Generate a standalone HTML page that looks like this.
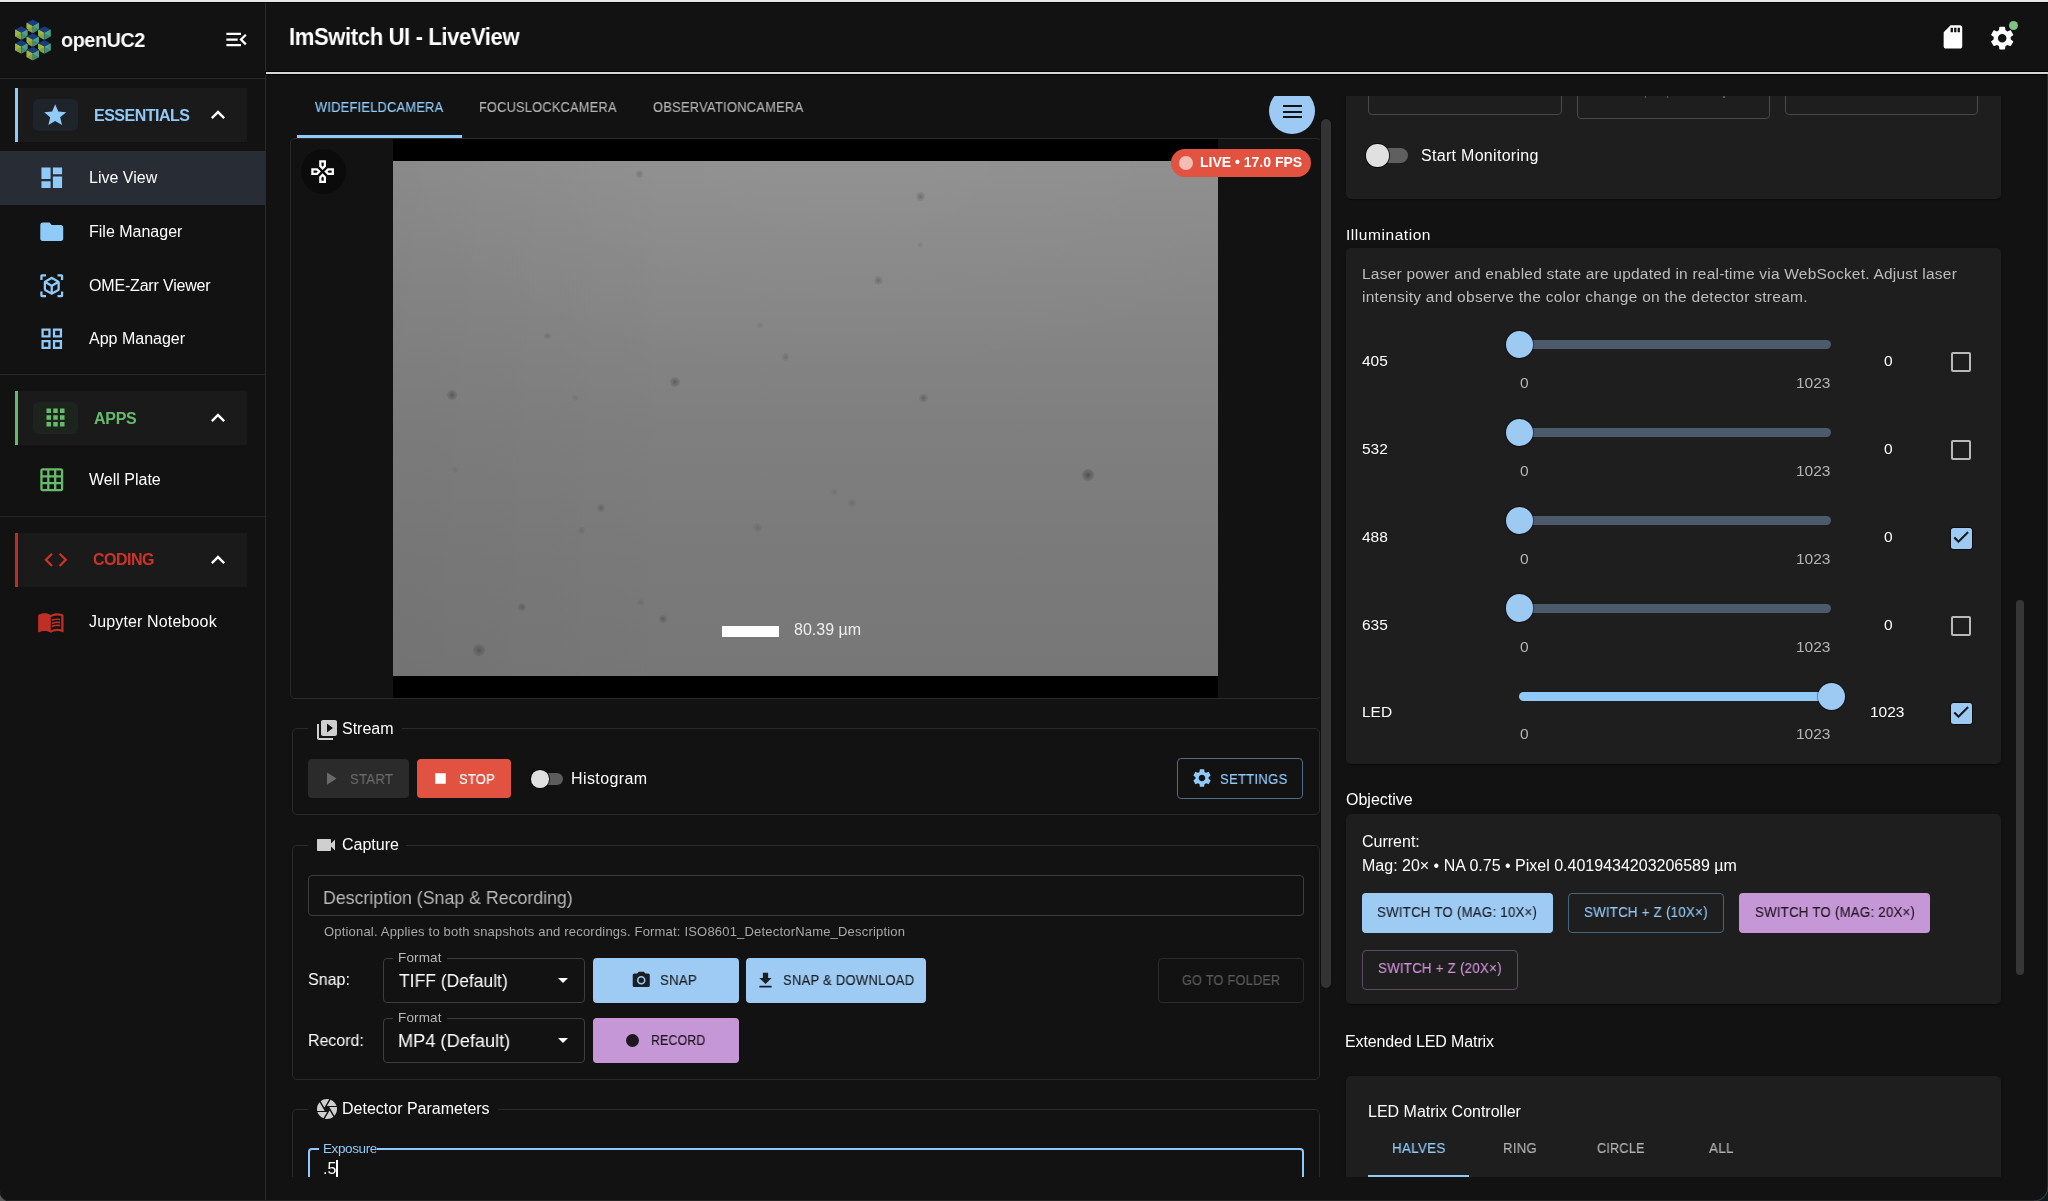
<!DOCTYPE html>
<html><head><meta charset="utf-8">
<style>
*{box-sizing:border-box;margin:0;padding:0}
html,body{width:2048px;height:1201px;overflow:hidden;background:#121212;font-family:"Liberation Sans",sans-serif;color:#fff}
.a{position:absolute}
.t{position:absolute;white-space:nowrap;line-height:1}
svg.i{position:absolute;display:block}
.t,.lbl,.gname{will-change:transform}
.m{-webkit-text-stroke:0.15px currentColor}
#topstrip{left:0;top:0;width:2048px;height:2px;background:#e6e6e6}
#topblack{left:0;top:2px;width:2048px;height:1px;background:#050505}
.div{position:absolute;left:0;width:265px;height:1px;background:#262626}
.grp{position:absolute;left:15px;width:232px;height:54px;background:#1a1a1a;border-left:3px solid}
.ibox{position:absolute;left:15px;top:11px;width:45px;height:32px;border-radius:6px}
.gname{position:absolute;left:76px;top:19px;font-size:16px;font-weight:bold;line-height:1}
.lbl{position:absolute;font-size:16px;color:#fff;line-height:1;white-space:nowrap}
#hdrline{left:266px;top:72px;width:1782px;height:1.6px;background:#d6d6d6;box-shadow:0 0 0 1px #000}
</style></head>
<body>
<div class="a" id="topstrip"></div><div class="a" id="topblack"></div>

<!-- ============ SIDEBAR ============ -->
<div class="a" style="left:265px;top:3px;width:1px;height:1198px;background:#2a2a2a"></div>
<div class="div" style="top:78px"></div>
<!-- logo -->
<svg class="i" style="left:0;top:0" width="70" height="70" viewBox="0 0 70 70">
  <defs>
    <g id="cube">
      <polygon points="0,0 6.2,3.4 6.2,10.4 0,13.8 -6.2,10.4 -6.2,3.4" fill="#0a0a0e" stroke="#0a0a0e" stroke-width="1"/>
      <polygon points="0,0 6.2,3.4 0,6.8 -6.2,3.4" fill="#1b3a80"/>
      <polygon points="-6.2,3.4 0,6.8 0,13.8 -6.2,10.4" fill="#879f48"/>
      <polygon points="-6.2,3.4 0,6.8 -3.1,8.6" fill="#9cbd3d"/>
      <polygon points="-6.2,3.4 -6.2,10.4 -3.1,8.6" fill="#97b83f"/>
      <polygon points="6.2,3.4 0,6.8 0,13.8 6.2,10.4" fill="#3d8a80"/>
      <polygon points="6.2,3.4 0,6.8 3.1,8.6" fill="#4fa78a"/>
      <polygon points="6.2,3.4 6.2,10.4 3.1,8.6" fill="#4aa288"/>
    </g>
  </defs>
  <use href="#cube" x="32.8" y="19.4"/>
  <use href="#cube" x="21.3" y="26.2"/>
  <use href="#cube" x="44.4" y="26.2"/>
  <use href="#cube" x="32.8" y="33.2"/>
  <use href="#cube" x="21.3" y="40"/>
  <use href="#cube" x="44.4" y="40"/>
  <use href="#cube" x="32.8" y="46.8"/>
</svg>
<div class="t" style="left:61px;top:29px;font-size:21px;font-weight:bold;letter-spacing:-0.4px;transform:scaleX(0.94);transform-origin:0 0">openUC2</div>
<svg class="i" style="left:222.6px;top:26.3px" width="27" height="27" viewBox="0 0 24 24"><path fill="#fff" d="M3 18h13v-2H3v2zm0-5h10v-2H3v2zm0-7v2h13V6H3zm18 9.59L17.42 12 21 8.41 19.59 7l-5 5 5 5L21 15.59z"/></svg>

<!-- essentials -->
<div class="grp" style="top:88px;border-color:#90caf9">
  <div class="ibox" style="background:#1f242b"></div>
  <div class="gname" style="color:#90caf9;letter-spacing:-0.5px;top:20px">ESSENTIALS</div>
</div>
<svg class="i" style="left:42.1px;top:101.75px" width="26.4" height="26.4" viewBox="0 0 24 24"><path fill="#90caf9" d="M12 17.27L18.18 21l-1.64-7.03L22 9.24l-7.19-.61L12 2 9.19 8.63 2 9.24l5.46 4.73L5.82 21z"/></svg>
<svg class="i" style="left:204px;top:101px" width="28" height="28" viewBox="0 0 24 24"><path fill="#fff" d="M12 8l-6 6 1.41 1.41L12 10.83l4.59 4.58L18 14z"/></svg>

<div class="a" style="left:0;top:151px;width:265px;height:54px;background:#272c35"></div>
<svg class="i" style="left:37.6px;top:164px" width="27.5" height="27.5" viewBox="0 0 24 24"><path fill="#90caf9" d="M3 13h8V3H3v10zm0 8h8v-6H3v6zm10 0h8V11h-8v10zm0-18v6h8V3h-8z"/></svg>
<div class="lbl" style="left:89px;top:170px">Live View</div>

<svg class="i" style="left:37.5px;top:218px" width="27.5" height="27.5" viewBox="0 0 24 24"><path fill="#90caf9" d="M10 4H4c-1.1 0-1.99.9-1.99 2L2 18c0 1.1.9 2 2 2h16c1.1 0 2-.9 2-2V8c0-1.1-.9-2-2-2h-8l-2-2z"/></svg>
<div class="lbl" style="left:89px;top:223.5px">File Manager</div>

<svg class="i" style="left:37.5px;top:272px" width="27.5" height="27.5" viewBox="0 0 24 24"><path fill="#90caf9" d="M18.25 7.6l-5.5-3.18c-.46-.27-1.04-.27-1.5 0L5.75 7.6c-.46.27-.75.76-.75 1.3v6.35c0 .54.29 1.03.75 1.3l5.5 3.18c.46.27 1.04.27 1.5 0l5.5-3.18c.46-.27.75-.76.75-1.3V8.9c0-.54-.29-1.03-.75-1.3zM7 14.96v-4.62l4 2.32v4.61l-4-2.31zm5-4.03L8 8.61l4-2.31 4 2.31-4 2.32zm1 6.34v-4.61l4-2.32v4.62l-4 2.31zM7 2H3.5C2.67 2 2 2.67 2 3.5V7h2V4h3V2zm10 0h3.5c.83 0 1.5.67 1.5 1.5V7h-2V4h-3V2zM7 22H3.5c-.83 0-1.5-.67-1.5-1.5V17h2v3h3v2zm10 0h3.5c.83 0 1.5-.67 1.5-1.5V17h-2v3h-3v2z"/></svg>
<div class="lbl" style="left:89px;top:277.5px;letter-spacing:-0.18px">OME-Zarr Viewer</div>

<svg class="i" style="left:37.5px;top:325px" width="27.5" height="27.5" viewBox="0 0 24 24"><path fill="#90caf9" d="M3 3v8h8V3H3zm6 6H5V5h4v4zm-6 4v8h8v-8H3zm6 6H5v-4h4v4zm4-16v8h8V3h-8zm6 6h-4V5h4v4zm-6 4v8h8v-8h-8zm6 6h-4v-4h4v4z"/></svg>
<div class="lbl" style="left:89px;top:331px">App Manager</div>

<div class="div" style="top:374px"></div>
<!-- apps -->
<div class="grp" style="top:391px;border-color:#66bb6a">
  <div class="ibox" style="background:#1c241d"></div>
  <div class="gname" style="color:#66bb6a;letter-spacing:-0.3px;top:20px">APPS</div>
</div>
<svg class="i" style="left:42px;top:404px" width="27" height="27" viewBox="0 0 24 24"><path fill="#66bb6a" d="M4 8h4V4H4v4zm6 12h4v-4h-4v4zm-6 0h4v-4H4v4zm0-6h4v-4H4v4zm6 0h4v-4h-4v4zm6-10v4h4V4h-4zm-6 4h4V4h-4v4zm6 6h4v-4h-4v4zm0 6h4v-4h-4v4z"/></svg>
<svg class="i" style="left:204px;top:404px" width="28" height="28" viewBox="0 0 24 24"><path fill="#fff" d="M12 8l-6 6 1.41 1.41L12 10.83l4.59 4.58L18 14z"/></svg>

<svg class="i" style="left:37.5px;top:466px" width="27.5" height="27.5" viewBox="0 0 24 24"><path fill="#66bb6a" d="M20 2H4c-1.1 0-2 .9-2 2v16c0 1.1.9 2 2 2h16c1.1 0 2-.9 2-2V4c0-1.1-.9-2-2-2zM8 20H4v-4h4v4zm0-6H4v-4h4v4zm0-6H4V4h4v4zm6 12h-4v-4h4v4zm0-6h-4v-4h4v4zm0-6h-4V4h4v4zm6 12h-4v-4h4v4zm0-6h-4v-4h4v4zm0-6h-4V4h4v4z"/></svg>
<div class="lbl" style="left:89px;top:472px">Well Plate</div>

<div class="div" style="top:516px"></div>
<!-- coding -->
<div class="grp" style="top:533px;border-color:#bf2e24">
  <div class="gname" style="color:#cc3428;letter-spacing:-0.5px;top:19.2px;left:75px">CODING</div>
</div>
<svg class="i" style="left:41.6px;top:546px" width="27.7" height="27.7" viewBox="0 0 24 24"><path fill="#c83428" d="M9.4 16.6L4.8 12l4.6-4.6L8 6l-6 6 6 6 1.4-1.4zm5.2 0l4.6-4.6-4.6-4.6L16 6l6 6-6 6-1.4-1.4z"/></svg>
<svg class="i" style="left:204px;top:546px" width="28" height="28" viewBox="0 0 24 24"><path fill="#fff" d="M12 8l-6 6 1.41 1.41L12 10.83l4.59 4.58L18 14z"/></svg>

<svg class="i" style="left:37.4px;top:608.1px" width="27.7" height="27.7" viewBox="0 0 24 24"><path fill="#be3026" d="M21 5c-1.11-.35-2.33-.5-3.5-.5-1.95 0-4.05.4-5.5 1.5-1.45-1.1-3.55-1.5-5.5-1.5S2.45 4.9 1 6v14.65c0 .25.25.5.5.5.1 0 .15-.05.25-.05C3.1 20.45 5.05 20 6.5 20c1.95 0 4.05.4 5.5 1.5 1.35-.85 3.8-1.5 5.5-1.5 1.65 0 3.35.3 4.75 1.05.1.05.15.05.25.05.25 0 .5-.25.5-.5V6c-.6-.45-1.25-.75-2-1zm0 13.5c-1.1-.35-2.3-.5-3.5-.5-1.7 0-4.150.65-5.5 1.5V8c1.35-.85 3.8-1.5 5.5-1.5 1.2 0 2.4.15 3.5.5v11.5z M17.5 10.5c.88 0 1.73.09 2.5.26V9.24c-.79-.15-1.64-.24-2.5-.24-1.7 0-3.24.29-4.5.83v1.66c1.13-.64 2.7-.99 4.5-.99zM13 12.49v1.66c1.13-.64 2.7-.99 4.5-.99.88 0 1.73.09 2.5.26V11.9c-.79-.15-1.64-.24-2.5-.24-1.7 0-3.24.3-4.5.83zM17.5 14.33c-1.7 0-3.24.29-4.5.83v1.66c1.13-.64 2.7-.99 4.5-.99.88 0 1.73.09 2.5.26v-1.52c-.79-.16-1.64-.24-2.5-.24z"/></svg>
<div class="lbl" style="left:89px;top:614px;letter-spacing:0.15px">Jupyter Notebook</div>

<!-- ============ HEADER ============ -->
<div class="t" style="left:289px;top:25px;font-size:24px;font-weight:bold;letter-spacing:-0.4px;transform:scaleX(0.918);transform-origin:0 0">ImSwitch UI - LiveView</div>
<svg class="i" style="left:1938.9px;top:23.2px" width="27.9" height="27.9" viewBox="0 0 24 24"><path fill="#fff" d="M18 2h-8L4.02 8 4 20c0 1.1.9 2 2 2h12c1.1 0 2-.9 2-2V4c0-1.1-.9-2-2-2zm-6 6h-2V4h2v4zm3 0h-2V4h2v4zm3 0h-2V4h2v4z"/></svg>
<svg class="i" style="left:1987.8px;top:23.6px" width="28.4" height="28.4" viewBox="0 0 24 24"><path fill="#fff" d="M19.14 12.94c.04-.3.06-.61.06-.94 0-.32-.02-.64-.07-.94l2.030-1.58c.18-.14.23-.41.12-.61l-1.92-3.32c-.12-.22-.37-.29-.59-.22l-2.39.96c-.5-.38-1.03-.7-1.62-.94l-.36-2.54c-.04-.24-.24-.41-.48-.41h-3.84c-.24 0-.43.17-.47.41l-.36 2.54c-.59.24-1.13.57-1.62.94l-2.39-.96c-.22-.08-.47 0-.59.22L2.74 8.87c-.12.21-.08.47.12.61l2.03 1.58c-.05.3-.09.63-.09.94s.02.64.07.94l-2.03 1.58c-.18.14-.23.41-.12.61l1.92 3.32c.12.22.37.29.59.22l2.39-.96c.5.38 1.03.7 1.62.94l.36 2.54c.05.24.24.41.48.41h3.840c.24 0 .44-.17.47-.41l.36-2.54c.59-.24 1.13-.56 1.62-.94l2.39.96c.22.08.47 0 .59-.22l1.92-3.32c.12-.22.07-.47-.12-.61l-2.01-1.58zM12 15.6c-1.98 0-3.6-1.62-3.6-3.6s1.62-3.6 3.6-3.6 3.6 1.62 3.6 3.6-1.62 3.6-3.6 3.6z"/></svg>
<div class="a" style="left:2008.75px;top:20.75px;width:9.5px;height:9.5px;border-radius:50%;background:#7cc47f"></div>
<div class="a" id="hdrline"></div>


<!-- ============ MAIN ============ -->
<!-- tabs -->
<div class="t m" style="left:315px;top:99.5px;font-size:14px;color:#90caf9;letter-spacing:0.3px;transform:scaleX(0.913);transform-origin:0 0">WIDEFIELDCAMERA</div>
<div class="t m" style="left:479px;top:99.5px;font-size:14px;color:#b3b3b3;letter-spacing:0.3px;transform:scaleX(0.9086);transform-origin:0 0">FOCUSLOCKCAMERA</div>
<div class="t m" style="left:653px;top:99.5px;font-size:14px;color:#b3b3b3;letter-spacing:0.3px;transform:scaleX(0.9183);transform-origin:0 0">OBSERVATIONCAMERA</div>
<div class="a" style="left:297px;top:135px;width:165px;height:3px;background:#90caf9"></div>

<!-- video card -->
<div class="a" style="left:290px;top:138px;width:1032px;height:561px;border:1px solid #2a2a2a;border-radius:5px"></div>
<div class="a" style="left:393px;top:139px;width:825px;height:559px;background:#000"></div>
<div class="a" id="img" style="left:393px;top:161px;width:825px;height:515px;background:radial-gradient(ellipse 60% 45% at 55% 0%,rgba(255,255,255,.03),rgba(255,255,255,0)),linear-gradient(90deg,rgba(0,0,0,.035) 0%,rgba(0,0,0,0) 35%),linear-gradient(180deg,#8f8f8f 0%,#868686 28%,#7f7f7f 52%,#7a7a7a 78%,#777777 100%)"><div class="a" style="left:242.9px;top:9.2px;width:7.5px;height:7.5px;border-radius:50%;background:radial-gradient(circle,rgba(40,40,40,0.26) 0%,rgba(40,40,40,0.13) 40%,rgba(40,40,40,0) 100%)"></div><div class="a" style="left:523.1px;top:31.4px;width:8.5px;height:8.5px;border-radius:50%;background:radial-gradient(circle,rgba(40,40,40,0.34) 0%,rgba(40,40,40,0.16) 40%,rgba(40,40,40,0) 100%)"></div><div class="a" style="left:481.1px;top:115.0px;width:8.5px;height:8.5px;border-radius:50%;background:radial-gradient(circle,rgba(40,40,40,0.30) 0%,rgba(40,40,40,0.14) 40%,rgba(40,40,40,0) 100%)"></div><div class="a" style="left:151.0px;top:171.6px;width:6.8px;height:6.8px;border-radius:50%;background:radial-gradient(circle,rgba(40,40,40,0.22) 0%,rgba(40,40,40,0.11) 40%,rgba(40,40,40,0) 100%)"></div><div class="a" style="left:53.6px;top:228.6px;width:10.2px;height:10.2px;border-radius:50%;background:radial-gradient(circle,rgba(40,40,40,0.45) 0%,rgba(40,40,40,0.22) 40%,rgba(40,40,40,0) 100%)"></div><div class="a" style="left:276.6px;top:215.7px;width:10.2px;height:10.2px;border-radius:50%;background:radial-gradient(circle,rgba(40,40,40,0.41) 0%,rgba(40,40,40,0.20) 40%,rgba(40,40,40,0) 100%)"></div><div class="a" style="left:526.1px;top:232.8px;width:8.5px;height:8.5px;border-radius:50%;background:radial-gradient(circle,rgba(40,40,40,0.34) 0%,rgba(40,40,40,0.16) 40%,rgba(40,40,40,0) 100%)"></div><div class="a" style="left:388.7px;top:192.3px;width:7.5px;height:7.5px;border-radius:50%;background:radial-gradient(circle,rgba(40,40,40,0.22) 0%,rgba(40,40,40,0.11) 40%,rgba(40,40,40,0) 100%)"></div><div class="a" style="left:688.6px;top:307.8px;width:12.2px;height:12.2px;border-radius:50%;background:radial-gradient(circle,rgba(40,40,40,0.56) 0%,rgba(40,40,40,0.27) 40%,rgba(40,40,40,0) 100%)"></div><div class="a" style="left:203.9px;top:343.2px;width:8.2px;height:8.2px;border-radius:50%;background:radial-gradient(circle,rgba(40,40,40,0.30) 0%,rgba(40,40,40,0.14) 40%,rgba(40,40,40,0) 100%)"></div><div class="a" style="left:185.3px;top:366.2px;width:6.8px;height:6.8px;border-radius:50%;background:radial-gradient(circle,rgba(40,40,40,0.19) 0%,rgba(40,40,40,0.09) 40%,rgba(40,40,40,0) 100%)"></div><div class="a" style="left:360.2px;top:362.4px;width:8.5px;height:8.5px;border-radius:50%;background:radial-gradient(circle,rgba(40,40,40,0.19) 0%,rgba(40,40,40,0.09) 40%,rgba(40,40,40,0) 100%)"></div><div class="a" style="left:455.1px;top:338.1px;width:7.5px;height:7.5px;border-radius:50%;background:radial-gradient(circle,rgba(40,40,40,0.19) 0%,rgba(40,40,40,0.09) 40%,rgba(40,40,40,0) 100%)"></div><div class="a" style="left:124.5px;top:441.9px;width:8.2px;height:8.2px;border-radius:50%;background:radial-gradient(circle,rgba(40,40,40,0.34) 0%,rgba(40,40,40,0.16) 40%,rgba(40,40,40,0) 100%)"></div><div class="a" style="left:266.1px;top:453.9px;width:8.2px;height:8.2px;border-radius:50%;background:radial-gradient(circle,rgba(40,40,40,0.34) 0%,rgba(40,40,40,0.16) 40%,rgba(40,40,40,0) 100%)"></div><div class="a" style="left:244.5px;top:438.3px;width:6.8px;height:6.8px;border-radius:50%;background:radial-gradient(circle,rgba(40,40,40,0.19) 0%,rgba(40,40,40,0.09) 40%,rgba(40,40,40,0) 100%)"></div><div class="a" style="left:80.0px;top:483.0px;width:11.6px;height:11.6px;border-radius:50%;background:radial-gradient(circle,rgba(40,40,40,0.41) 0%,rgba(40,40,40,0.20) 40%,rgba(40,40,40,0) 100%)"></div><div class="a" style="left:438.3px;top:327.6px;width:6.8px;height:6.8px;border-radius:50%;background:radial-gradient(circle,rgba(40,40,40,0.15) 0%,rgba(40,40,40,0.07) 40%,rgba(40,40,40,0) 100%)"></div><div class="a" style="left:523.6px;top:80.6px;width:6.8px;height:6.8px;border-radius:50%;background:radial-gradient(circle,rgba(40,40,40,0.15) 0%,rgba(40,40,40,0.07) 40%,rgba(40,40,40,0) 100%)"></div><div class="a" style="left:363.6px;top:160.6px;width:6.8px;height:6.8px;border-radius:50%;background:radial-gradient(circle,rgba(40,40,40,0.15) 0%,rgba(40,40,40,0.07) 40%,rgba(40,40,40,0) 100%)"></div><div class="a" style="left:178.6px;top:233.6px;width:6.8px;height:6.8px;border-radius:50%;background:radial-gradient(circle,rgba(40,40,40,0.15) 0%,rgba(40,40,40,0.07) 40%,rgba(40,40,40,0) 100%)"></div><div class="a" style="left:58.6px;top:305.6px;width:6.8px;height:6.8px;border-radius:50%;background:radial-gradient(circle,rgba(40,40,40,0.15) 0%,rgba(40,40,40,0.07) 40%,rgba(40,40,40,0) 100%)"></div></div>
<div class="a" style="left:301px;top:149px;width:45px;height:45px;border-radius:50%;background:#0b0b0b"></div>
<svg class="i" style="left:309px;top:158px" width="27.2" height="27.2" viewBox="0 0 24 24"><path fill="#fff" d="M15 7.5V2H9v5.5l3 3 3-3zM11 4h2v2.67l-1 1-1-1V4zm-3.5 5H2v6h5.5l3-3-3-3zM6.67 13H4v-2h2.67l1 1-1 1zM9 16.5V22h6v-5.5l-3-3-3 3zm4 3.5h-2v-2.67l1-1 1 1V20zm3.5-11l-3 3 3 3H22V9h-5.5zm3.5 4h-2.67l-1-1 1-1H20v2z"/></svg>
<div class="a" style="left:1171px;top:149px;width:140px;height:28px;border-radius:14px;background:#e25241"></div>
<div class="a" style="left:1179px;top:155.6px;width:14px;height:14px;border-radius:50%;background:#f3bdb6"></div>
<div class="t" style="left:1200px;top:155px;font-size:14px;font-weight:bold;color:#fff">LIVE • 17.0 FPS</div>
<div class="a" style="left:722px;top:625.5px;width:56.5px;height:11.5px;background:#fff"></div>
<div class="t" style="left:794px;top:622px;font-size:16px;color:#eee">80.39 µm</div>

<!-- blue fab (clipped) -->
<div class="a" style="left:1240px;top:96px;width:90px;height:60px;overflow:hidden">
  <div class="a" style="left:29px;top:-8px;width:46px;height:46px;border-radius:50%;background:#9ccaf4"></div>
  <div class="a" style="left:42.5px;top:9px;width:19.5px;height:2px;background:#121212"></div>
  <div class="a" style="left:42.5px;top:14.5px;width:19.5px;height:2px;background:#121212"></div>
  <div class="a" style="left:42.5px;top:20px;width:19.5px;height:2px;background:#121212"></div>
</div>
<!-- main scrollbar -->
<div class="a" style="left:1321px;top:119px;width:10px;height:869px;border-radius:5px;background:#343434;box-shadow:0 0 0 1px #101010"></div>

<!-- Stream fieldset -->
<div class="a" style="left:292px;top:728px;width:1028px;height:87px;border:1px solid #2a2a2a;border-radius:5px"></div>
<div class="a" style="left:308px;top:720px;width:94px;height:16px;background:#121212"></div>
<svg class="i" style="left:314.5px;top:717.5px" width="24" height="24" viewBox="0 0 24 24"><path fill="#cfcfcf" d="M4 6H2v14c0 1.1.9 2 2 2h14v-2H4V6zm16-4H8c-1.1 0-2 .9-2 2v12c0 1.1.9 2 2 2h12c1.1 0 2-.9 2-2V4c0-1.1-.9-2-2-2zm-8 12.5v-9l6 4.5-6 4.5z"/></svg>
<div class="t" style="left:342px;top:721px;font-size:16px">Stream</div>

<div class="a" style="left:308px;top:759px;width:101px;height:39px;border-radius:4px;background:#2b2b2b"></div>
<svg class="i" style="left:320px;top:768px" width="21" height="21" viewBox="0 0 24 24"><path fill="#6a6a6a" d="M8 5v14l11-7z"/></svg>
<div class="t m" style="left:350px;top:772px;font-size:14.5px;color:#6a6a6a;letter-spacing:0.3px;transform:scaleX(0.9065);transform-origin:0 0">START</div>
<div class="a" style="left:417px;top:759px;width:94px;height:39px;border-radius:4px;background:#e25241"></div>
<svg class="i" style="left:430px;top:768px" width="21" height="21" viewBox="0 0 24 24"><path fill="#fff" d="M6 6h12v12H6z"/></svg>
<div class="t m" style="left:459px;top:772px;font-size:14.5px;color:#fff;letter-spacing:0.3px;transform:scaleX(0.89);transform-origin:0 0">STOP</div>
<div class="a" style="left:532px;top:773px;width:31px;height:11.5px;border-radius:6px;background:#5c5c5c"></div>
<div class="a" style="left:531px;top:770px;width:17.6px;height:17.6px;border-radius:50%;background:#e0e0e0;box-shadow:0 0 0 1px rgba(0,0,0,.7)"></div>
<div class="t" style="left:571px;top:771px;font-size:16px;letter-spacing:0.4px">Histogram</div>

<div class="a" style="left:1177px;top:758px;width:126px;height:41px;border:1px solid #4f6d86;border-radius:4px"></div>
<svg class="i" style="left:1190.5px;top:767px" width="22" height="22" viewBox="0 0 24 24"><path fill="#90caf9" d="M19.14 12.94c.04-.3.06-.61.06-.94 0-.32-.02-.64-.07-.94l2.03-1.58c.18-.14.23-.41.12-.61l-1.92-3.32c-.12-.22-.37-.29-.59-.22l-2.39.96c-.5-.38-1.03-.7-1.62-.94l-.36-2.54c-.04-.24-.24-.41-.48-.41h-3.84c-.24 0-.43.17-.47.41l-.36 2.54c-.59.24-1.13.57-1.62.94l-2.39-.96c-.22-.08-.47 0-.59.22L2.74 8.87c-.12.21-.08.47.12.61l2.03 1.58c-.05.3-.09.63-.09.94s.02.64.07.94l-2.03 1.58c-.18.14-.23.41-.12.61l1.92 3.32c.12.22.37.29.59.22l2.39-.96c.5.38 1.03.7 1.62.94l.36 2.54c.05.24.24.41.48.41h3.84c.24 0 .44-.17.47-.41l.36-2.54c.59-.24 1.13-.56 1.62-.94l2.39.96c.22.08.47 0 .59-.22l1.92-3.32c.12-.22.07-.47-.12-.61l-2.01-1.58zM12 15.6c-1.98 0-3.6-1.62-3.6-3.6s1.62-3.6 3.6-3.6 3.6 1.62 3.6 3.6-1.62 3.6-3.6 3.6z"/></svg>
<div class="t m" style="left:1220px;top:772px;font-size:14.5px;color:#90caf9;letter-spacing:0.3px;transform:scaleX(0.9014);transform-origin:0 0">SETTINGS</div>

<!-- Capture fieldset -->
<div class="a" style="left:292px;top:845px;width:1028px;height:235px;border:1px solid #2a2a2a;border-radius:5px"></div>
<div class="a" style="left:308px;top:836px;width:98px;height:16px;background:#121212"></div>
<svg class="i" style="left:314px;top:832.5px" width="24" height="24" viewBox="0 0 24 24"><path fill="#cfcfcf" d="M17 10.5V7c0-.55-.45-1-1-1H4c-.55 0-1 .45-1 1v10c0 .55.45 1 1 1h12c.55 0 1-.45 1-1v-3.5l4 4v-11l-4 4z"/></svg>
<div class="t" style="left:342px;top:837px;font-size:16px">Capture</div>

<div class="a" style="left:308px;top:875px;width:996px;height:41px;border:1px solid #3d3d3d;border-radius:4px"></div>
<div class="t" style="left:323px;top:888px;font-size:19px;color:#b8b8b8;letter-spacing:0px;transform:scaleX(0.9347);transform-origin:0 0">Description (Snap &amp; Recording)</div>
<div class="t" style="left:324px;top:925px;font-size:13px;color:#a9a9a9;letter-spacing:0.19px">Optional. Applies to both snapshots and recordings. Format: ISO8601_DetectorName_Description</div>

<div class="t" style="left:308px;top:971px;font-size:16.5px;letter-spacing:0px;transform:scaleX(0.9732);transform-origin:0 0">Snap:</div>
<div class="a" style="left:383px;top:958px;width:202px;height:45px;border:1px solid #3d3d3d;border-radius:4px"></div>
<div class="a" style="left:393px;top:950px;width:54px;height:14px;background:#121212"></div>
<div class="t" style="left:398px;top:951px;font-size:13.5px;color:#b8b8b8;letter-spacing:0.15px">Format</div>
<div class="t" style="left:399px;top:971px;font-size:19px;letter-spacing:0px;transform:scaleX(0.9195);transform-origin:0 0">TIFF (Default)</div>
<svg class="i" style="left:551px;top:968px" width="24" height="24" viewBox="0 0 24 24"><path fill="#fff" d="M7 10l5 5 5-5z"/></svg>
<div class="a" style="left:593px;top:958px;width:146px;height:45px;border-radius:4px;background:#9ecbf4"></div>
<svg class="i" style="left:631px;top:970px" width="20.5" height="20.5" viewBox="0 0 24 24"><path fill="#1b1f24" d="M12 8.8a3.2 3.2 0 1 0 0 6.4 3.2 3.2 0 1 0 0-6.4zM9 2L7.17 4H4c-1.1 0-2 .9-2 2v12c0 1.1.9 2 2 2h16c1.1 0 2-.9 2-2V6c0-1.1-.9-2-2-2h-3.17L15 2H9zm3 15c-2.76 0-5-2.24-5-5s2.24-5 5-5 5 2.24 5 5-2.240 5-5 5z"/></svg>
<div class="t m" style="left:660px;top:973px;font-size:14.5px;color:#1b1f24;letter-spacing:0.3px;transform:scaleX(0.9100);transform-origin:0 0">SNAP</div>
<div class="a" style="left:746px;top:958px;width:180px;height:45px;border-radius:4px;background:#9ecbf4"></div>
<svg class="i" style="left:754.5px;top:969.7px" width="21" height="21" viewBox="0 0 24 24"><path fill="#1b1f24" d="M19 9h-4V3H9v6H5l7 7 7-7zM5 18v2h14v-2H5z"/></svg>
<div class="t m" style="left:783px;top:973px;font-size:14.5px;color:#1b1f24;letter-spacing:0.3px;transform:scaleX(0.8947);transform-origin:0 0">SNAP &amp; DOWNLOAD</div>
<div class="a" style="left:1158px;top:958px;width:146px;height:45px;border:1px solid #2c2c2c;border-radius:4px"></div>
<div class="t m" style="left:1182px;top:973px;font-size:14.5px;color:#5a5a5a;letter-spacing:0.3px;transform:scaleX(0.8745);transform-origin:0 0">GO TO FOLDER</div>

<div class="t" style="left:308.2px;top:1032px;font-size:16.5px;letter-spacing:0px;transform:scaleX(0.9661);transform-origin:0 0">Record:</div>
<div class="a" style="left:383px;top:1018px;width:202px;height:45px;border:1px solid #3d3d3d;border-radius:4px"></div>
<div class="a" style="left:393px;top:1010px;width:54px;height:14px;background:#121212"></div>
<div class="t" style="left:398px;top:1011px;font-size:13.5px;color:#b8b8b8;letter-spacing:0.15px">Format</div>
<div class="t" style="left:398.3px;top:1031px;font-size:19px;letter-spacing:0px;transform:scaleX(0.9583);transform-origin:0 0">MP4 (Default)</div>
<svg class="i" style="left:551px;top:1028px" width="24" height="24" viewBox="0 0 24 24"><path fill="#fff" d="M7 10l5 5 5-5z"/></svg>
<div class="a" style="left:593px;top:1018px;width:146px;height:45px;border-radius:4px;background:#c697d6"></div>
<div class="a" style="left:625.5px;top:1034px;width:13.4px;height:13.4px;border-radius:50%;background:#1e1620"></div>
<div class="t m" style="left:651px;top:1033px;font-size:14.5px;color:#1e1620;letter-spacing:0.3px;transform:scaleX(0.8444);transform-origin:0 0">RECORD</div>

<!-- Detector Parameters -->
<div class="a" style="left:0;top:0;width:2048px;height:1177px;overflow:hidden;pointer-events:none">
<div class="a" style="left:292px;top:1109px;width:1028px;height:200px;border:1px solid #2a2a2a;border-radius:5px"></div>
<div class="a" style="left:308px;top:1100px;width:190px;height:16px;background:#121212"></div>
<svg class="i" style="left:314.5px;top:1097px" width="24" height="24" viewBox="0 0 24 24"><path fill="#cfcfcf" d="M9.4 10.5l4.77-8.26C13.47 2.09 12.75 2 12 2c-2.4 0-4.6.85-6.32 2.25l3.66 6.35.06-.1zM21.54 9c-.92-2.92-3.15-5.26-6-6.34L11.88 9h9.66zm.26 1h-7.49l.29.5 4.76 8.25C21 16.97 22 14.61 22 12c0-.69-.07-1.35-.2-2zM8.54 12l-3.9-6.75C3.01 7.03 2 9.39 2 12c0 .69.07 1.35.2 2h7.49l-1.15-2zm-6.08 3c.92 2.92 3.15 5.26 6 6.34L12.12 15H2.46zm11.27 0l-3.9 6.76c.7.15 1.42.24 2.17.24 2.4 0 4.6-.85 6.32-2.25l-3.66-6.35-.93 1.6z"/></svg>
<div class="t" style="left:342px;top:1101px;font-size:16px">Detector Parameters</div>
<div class="a" style="left:308px;top:1148px;width:996px;height:60px;border:2px solid #90caf9;border-radius:4px"></div>
<div class="a" style="left:319px;top:1140px;width:58px;height:14px;background:#121212"></div>
<div class="t" style="left:323px;top:1142px;font-size:13.5px;color:#90caf9;letter-spacing:-0.4px">Exposure</div>
<div class="t" style="left:323px;top:1161px;font-size:16px">.5</div>
<div class="a" style="left:336px;top:1159.5px;width:1.6px;height:18px;background:#fff"></div>
</div>



<!-- ============ RIGHT PANEL ============ -->
<div class="a" style="left:1262px;top:96px;width:786px;height:1081px;overflow:hidden">
<div class="a" style="left:0;top:0;width:786px;height:1081px;transform:translate(-1262px,-96px)">
<div class="a" style="left:1346px;top:60px;width:655px;height:139px;border-radius:5px;background:#1e1e1e;box-shadow:0 2px 1px -1px rgba(0,0,0,.2),0 1px 1px 0 rgba(0,0,0,.14),0 1px 3px 0 rgba(0,0,0,.12)"></div>
<div class="a" style="left:1368px;top:60px;width:194px;height:55px;border:1px solid #484848;border-radius:4px"></div>
<div class="a" style="left:1577px;top:60px;width:193px;height:58.5px;border:1px solid #484848;border-radius:4px"></div>
<div class="a" style="left:1785px;top:60px;width:193px;height:54.5px;border:1px solid #484848;border-radius:4px"></div>
<div class="a" style="left:1369px;top:147.5px;width:39px;height:15.5px;border-radius:8px;background:#5f5f5f"></div>
<div class="a" style="left:1366px;top:144.2px;width:22.6px;height:22.6px;border-radius:50%;background:#e0e0e0;box-shadow:0 0 0 1px rgba(0,0,0,.7)"></div>
<div class="t" style="left:1421px;top:148px;font-size:16px;letter-spacing:0.3px">Start Monitoring</div>

<div class="t" style="left:1346px;top:227px;font-size:15.5px;letter-spacing:0.55px">Illumination</div>
<div class="a" style="left:1346px;top:248px;width:655px;height:516px;border-radius:5px;background:#1e1e1e;box-shadow:0 2px 1px -1px rgba(0,0,0,.2),0 1px 1px 0 rgba(0,0,0,.14),0 1px 3px 0 rgba(0,0,0,.12)"></div>
<div class="t" style="left:1361.5px;top:266px;font-size:15.5px;color:#bdbdbd;letter-spacing:0.22px">Laser power and enabled state are updated in real-time via WebSocket. Adjust laser</div>
<div class="t" style="left:1361.5px;top:289px;font-size:15.5px;color:#bdbdbd;letter-spacing:0.27px">intensity and observe the color change on the detector stream.</div>
<div class="t" style="left:1362px;top:353.3px;font-size:15.5px">405</div>
<div class="a" style="left:1519px;top:340.09999999999997px;width:312px;height:9.2px;border-radius:5px;background:#4b5b6c"></div>
<div class="a" style="left:1505.8px;top:330.9px;width:27.6px;height:27.6px;border-radius:50%;background:#9ccaf3;box-shadow:0 0 1px 1px rgba(0,0,0,.35)"></div>
<div class="t" style="left:1520px;top:375.1px;font-size:15.5px;color:#b5b5b5">0</div>
<div class="t" style="left:1795.5px;top:375.1px;font-size:15.5px;color:#b5b5b5">1023</div>
<div class="t" style="left:1884px;top:353.3px;font-size:15.5px">0</div>
<div class="a" style="left:1951px;top:352px;width:20px;height:20px;border-radius:2px;border:2px solid #b9b9b9"></div>
<div class="t" style="left:1362px;top:441.3px;font-size:15.5px">532</div>
<div class="a" style="left:1519px;top:428.09999999999997px;width:312px;height:9.2px;border-radius:5px;background:#4b5b6c"></div>
<div class="a" style="left:1505.8px;top:418.9px;width:27.6px;height:27.6px;border-radius:50%;background:#9ccaf3;box-shadow:0 0 1px 1px rgba(0,0,0,.35)"></div>
<div class="t" style="left:1520px;top:463.1px;font-size:15.5px;color:#b5b5b5">0</div>
<div class="t" style="left:1795.5px;top:463.1px;font-size:15.5px;color:#b5b5b5">1023</div>
<div class="t" style="left:1884px;top:441.3px;font-size:15.5px">0</div>
<div class="a" style="left:1951px;top:440px;width:20px;height:20px;border-radius:2px;border:2px solid #b9b9b9"></div>
<div class="t" style="left:1362px;top:529.3px;font-size:15.5px">488</div>
<div class="a" style="left:1519px;top:516.1px;width:312px;height:9.2px;border-radius:5px;background:#4b5b6c"></div>
<div class="a" style="left:1505.8px;top:506.90000000000003px;width:27.6px;height:27.6px;border-radius:50%;background:#9ccaf3;box-shadow:0 0 1px 1px rgba(0,0,0,.35)"></div>
<div class="t" style="left:1520px;top:551.1px;font-size:15.5px;color:#b5b5b5">0</div>
<div class="t" style="left:1795.5px;top:551.1px;font-size:15.5px;color:#b5b5b5">1023</div>
<div class="t" style="left:1884px;top:529.3px;font-size:15.5px">0</div>
<div class="a" style="left:1951px;top:527.5px;width:20.5px;height:21px;border-radius:2.5px;background:#9ccaf3;box-shadow:0 0 0 1px rgba(0,0,0,.6)"></div>
<svg class="i" style="left:1951.3px;top:526.7px" width="20" height="20" viewBox="0 0 24 24"><path fill="#121212" stroke="#121212" stroke-width="0.7" d="M9 16.17L4.83 12l-1.42 1.41L9 19 21 7l-1.41-1.41z"/></svg>
<div class="t" style="left:1362px;top:616.8px;font-size:15.5px">635</div>
<div class="a" style="left:1519px;top:603.6px;width:312px;height:9.2px;border-radius:5px;background:#4b5b6c"></div>
<div class="a" style="left:1505.8px;top:594.4000000000001px;width:27.6px;height:27.6px;border-radius:50%;background:#9ccaf3;box-shadow:0 0 1px 1px rgba(0,0,0,.35)"></div>
<div class="t" style="left:1520px;top:638.6px;font-size:15.5px;color:#b5b5b5">0</div>
<div class="t" style="left:1795.5px;top:638.6px;font-size:15.5px;color:#b5b5b5">1023</div>
<div class="t" style="left:1884px;top:616.8px;font-size:15.5px">0</div>
<div class="a" style="left:1951px;top:615.5px;width:20px;height:20px;border-radius:2px;border:2px solid #b9b9b9"></div>
<div class="t" style="left:1362px;top:704.3px;font-size:15.5px">LED</div>
<div class="a" style="left:1519px;top:691.8px;width:312px;height:9.2px;border-radius:5px;background:#90caf9"></div>
<div class="a" style="left:1817.7px;top:682.6px;width:27.6px;height:27.6px;border-radius:50%;background:#9ccaf3;box-shadow:0 0 1px 1px rgba(0,0,0,.35)"></div>
<div class="t" style="left:1520px;top:726.1px;font-size:15.5px;color:#b5b5b5">0</div>
<div class="t" style="left:1795.5px;top:726.1px;font-size:15.5px;color:#b5b5b5">1023</div>
<div class="t" style="left:1870px;top:704.3px;font-size:15.5px">1023</div>
<div class="a" style="left:1951px;top:702.5px;width:20.5px;height:21px;border-radius:2.5px;background:#9ccaf3;box-shadow:0 0 0 1px rgba(0,0,0,.6)"></div>
<svg class="i" style="left:1951.3px;top:701.7px" width="20" height="20" viewBox="0 0 24 24"><path fill="#121212" stroke="#121212" stroke-width="0.7" d="M9 16.17L4.83 12l-1.42 1.41L9 19 21 7l-1.41-1.41z"/></svg>

<div class="t" style="left:1346px;top:792px;font-size:16px">Objective</div>
<div class="a" style="left:1346px;top:814px;width:655px;height:190px;border-radius:5px;background:#1e1e1e;box-shadow:0 2px 1px -1px rgba(0,0,0,.2),0 1px 1px 0 rgba(0,0,0,.14),0 1px 3px 0 rgba(0,0,0,.12)"></div>
<div class="t" style="left:1362px;top:834px;font-size:16px">Current:</div>
<div class="t" style="left:1362px;top:858px;font-size:16px">Mag: 20× • NA 0.75 • Pixel 0.4019434203206589 µm</div>
<div class="a" style="left:1362px;top:893px;width:191px;height:39.5px;border-radius:4px;background:#9ecbf4"></div>
<div class="t m" style="left:1377px;top:905.3px;font-size:14px;color:#1b1f24;letter-spacing:0.3px;transform:scaleX(0.9408);transform-origin:0 0">SWITCH TO (MAG: 10X×)</div>
<div class="a" style="left:1567.5px;top:893px;width:156.5px;height:40px;border:1px solid #4b6378;border-radius:4px"></div>
<div class="t m" style="left:1584px;top:905.3px;font-size:14px;color:#90caf9;letter-spacing:0.3px;transform:scaleX(0.9438);transform-origin:0 0">SWITCH + Z (10X×)</div>
<div class="a" style="left:1738.5px;top:893px;width:191.5px;height:39.5px;border-radius:4px;background:#c697d6"></div>
<div class="t m" style="left:1754.5px;top:905.3px;font-size:14px;color:#1e1620;letter-spacing:0.3px;transform:scaleX(0.9408);transform-origin:0 0">SWITCH TO (MAG: 20X×)</div>
<div class="a" style="left:1362px;top:949.5px;width:155.5px;height:40px;border:1px solid #5e4a63;border-radius:4px"></div>
<div class="t m" style="left:1378px;top:961.3px;font-size:14px;color:#ce93d8;letter-spacing:0.3px;transform:scaleX(0.9438);transform-origin:0 0">SWITCH + Z (20X×)</div>

<div class="t" style="left:1345px;top:1034px;font-size:16px;letter-spacing:-0.12px">Extended LED Matrix</div>
<div class="a" style="left:1346px;top:1076px;width:655px;height:200px;border-radius:5px;background:#1e1e1e;box-shadow:0 2px 1px -1px rgba(0,0,0,.2),0 1px 1px 0 rgba(0,0,0,.14),0 1px 3px 0 rgba(0,0,0,.12)"></div>
<div class="t" style="left:1368px;top:1104px;font-size:16px">LED Matrix Controller</div>
<div class="t m" style="left:1392px;top:1141px;font-size:14.5px;color:#90caf9;letter-spacing:0.3px;transform:scaleX(0.9250);transform-origin:0 0">HALVES</div>
<div class="t m" style="left:1503px;top:1141px;font-size:14.5px;color:#b3b3b3;letter-spacing:0.3px;transform:scaleX(0.909);transform-origin:0 0">RING</div>
<div class="t m" style="left:1597px;top:1141px;font-size:14.5px;color:#b3b3b3;letter-spacing:0.3px;transform:scaleX(0.8668);transform-origin:0 0">CIRCLE</div>
<div class="t m" style="left:1709px;top:1141px;font-size:14.5px;color:#b3b3b3;letter-spacing:0.3px;transform:scaleX(0.931);transform-origin:0 0">ALL</div>
<div class="a" style="left:1368px;top:1175px;width:101px;height:2px;background:#90caf9"></div>
</div>
</div>
<div class="a" style="left:1644.7px;top:96.3px;width:1.3px;height:1.4px;background:#5a5a5a"></div><div class="a" style="left:1667px;top:96.3px;width:1.3px;height:1.4px;background:#5a5a5a"></div><div class="a" style="left:1723.3px;top:96.3px;width:1.3px;height:1.4px;background:#5a5a5a"></div>
<div class="a" style="left:2016px;top:600px;width:8px;height:375px;border-radius:4px;background:#363636"></div>
<div class="a" style="left:2047px;top:74px;width:1px;height:1127px;background:#2a2a2a"></div>
<div class="a" style="left:0;top:1200px;width:2048px;height:1px;background:#242424"></div>


<svg class="i" style="left:0;top:1191px" width="10" height="10" viewBox="0 0 10 10"><path d="M0 0 A10 10 0 0 0 10 10 L0 10 Z" fill="#5a5a5a"/><path d="M0 0 A10 10 0 0 0 10 10" fill="none" stroke="#1b1b1b" stroke-width="1.2"/></svg>
<svg class="i" style="left:2034px;top:1187px" width="14" height="14" viewBox="0 0 14 14"><path d="M14 0 A14 14 0 0 1 0 14 L14 14 Z" fill="#0d1a22"/><path d="M14 0 A14 14 0 0 1 0 14" fill="none" stroke="#3a3a3a" stroke-width="1.2"/></svg>
</body></html>
